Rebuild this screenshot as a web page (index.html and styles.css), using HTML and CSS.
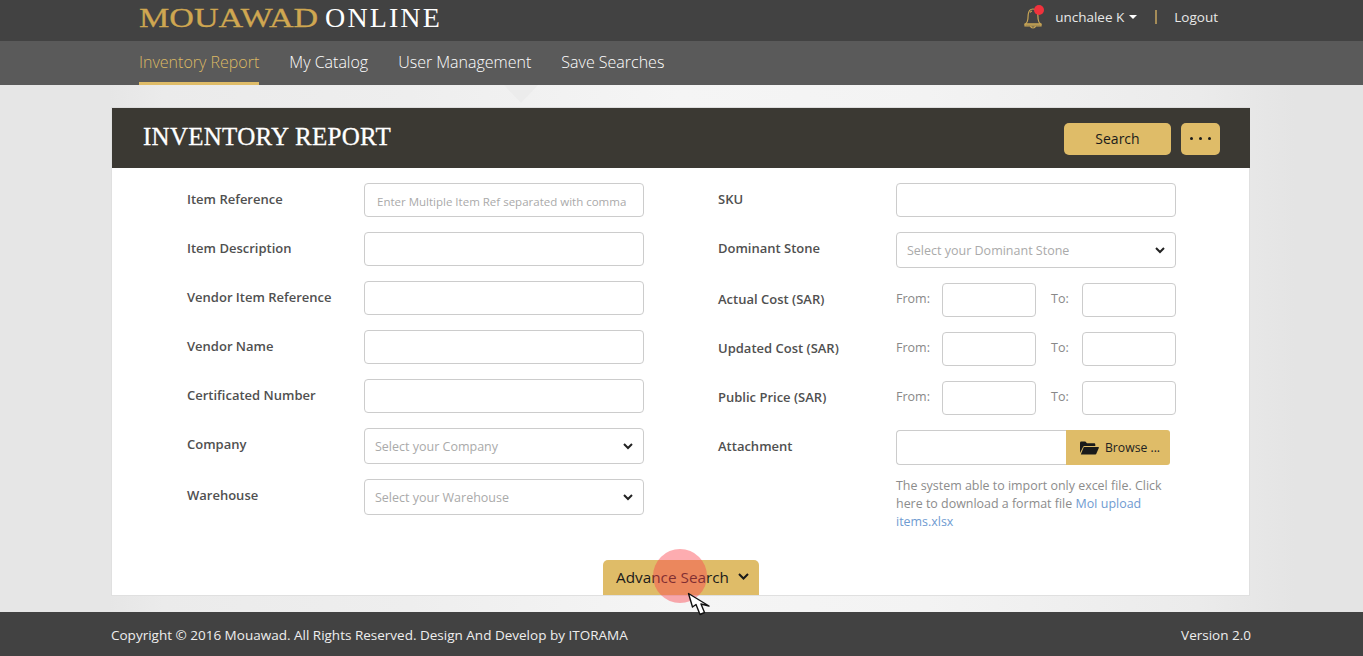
FILE: index.html
```html
<!DOCTYPE HTML>
<html lang="en">
<head>
	<title>Inventory Report - Mouawad Online</title>
	<meta charset="UTF-8">
	<link rel="stylesheet" href="styles.css">
</head>
<body>

<header class="topbar">
	<div class="brand"><span class="brand-gold">MOUAWAD</span><span class="brand-white">ONLINE</span></div>
	<div class="user-area">
		<span class="bell">
			<svg width="21" height="23" viewBox="0 0 21 23" fill="none" stroke="#c9a656" stroke-width="1.2">
				<path d="M1.500 18c1.500-1.300 2.200-2.500 2.400-5l.3-4.500C4.500 5.500 6.300 3 9 3s4.500 2.500 4.800 5.500l.3 4.500c.2 2.500.9 3.700 2.400 5z"/>
				<path d="M1 18.200h16v1.600H1z"/>
				<path d="M6.500 20c.3 1.300 1.300 2 2.500 2s2.200-.7 2.500-2"/>
				<path d="M6 6.500c.5-.8 1.200-1.300 2-1.500"/>
			</svg>
			<span class="bell-dot"></span>
		</span>
		<span class="user-name">unchalee K</span>
		<span class="caret"></span>
		<span class="divider"></span>
		<a class="logout" href="#">Logout</a>
	</div>
</header>

<nav class="navbar">
	<ul>
		<li><a class="active" href="#">Inventory Report</a></li>
		<li><a href="#">My Catalog</a></li>
		<li><a href="#">User Management</a></li>
		<li><a href="#">Save Searches</a></li>
	</ul>
</nav>

<main class="content">
	<section class="card">
		<div class="card-head">
			<h1>INVENTORY REPORT</h1>
			<div class="head-buttons">
				<button class="btn btn-search">Search</button>
				<button class="btn btn-more"><i></i><i></i><i></i></button>
			</div>
		</div>

		<form class="search-form">
			<div class="col col-left">
				<div class="row"><label>Item Reference</label><input class="field" placeholder="Enter Multiple Item Ref separated with comma"></div>
				<div class="row"><label>Item Description</label><input class="field"></div>
				<div class="row"><label>Vendor Item Reference</label><input class="field"></div>
				<div class="row"><label>Vendor Name</label><input class="field"></div>
				<div class="row"><label>Certificated Number</label><input class="field"></div>
				<div class="row row-select">
					<label>Company</label>
					<div class="select">Select your Company
						<svg width="10" height="7" viewBox="0 0 10 7" fill="none" stroke="#222" stroke-width="2"><path d="M1 1l4 4 4-4"/></svg>
					</div>
				</div>
				<div class="row row-select">
					<label>Warehouse</label>
					<div class="select">Select your Warehouse
						<svg width="10" height="7" viewBox="0 0 10 7" fill="none" stroke="#222" stroke-width="2"><path d="M1 1l4 4 4-4"/></svg>
					</div>
				</div>
			</div>

			<div class="col col-right">
				<div class="row"><label>SKU</label><input class="field"></div>
				<div class="row row-select row-tall">
					<label>Dominant Stone</label>
					<div class="select">Select your Dominant Stone
						<svg width="10" height="7" viewBox="0 0 10 7" fill="none" stroke="#222" stroke-width="2"><path d="M1 1l4 4 4-4"/></svg>
					</div>
				</div>
				<div class="row"><label>Actual Cost (SAR)</label><span class="from">From:</span><input class="field small"><span class="to">To:</span><input class="field small"></div>
				<div class="row"><label>Updated Cost (SAR)</label><span class="from">From:</span><input class="field small"><span class="to">To:</span><input class="field small"></div>
				<div class="row"><label>Public Price (SAR)</label><span class="from">From:</span><input class="field small"><span class="to">To:</span><input class="field small"></div>
				<div class="row row-file">
					<label>Attachment</label>
					<div class="file-box"></div>
					<div class="browse">
						<svg width="19" height="14" viewBox="0 0 19 14" fill="#1a1a1a"><path d="M0 12V2c0-.8.500-1.500 1.300-1.500h4L7 2.200h7c.8 0 1.300.5 1.300 1.300V5H4.500C3.800 5 3.300 5.300 3 6z"/><path d="M3.800 6h14.400c.5 0 .8.400.6.900l-2.600 6.100c-.1.300-.5.500-.8.500H.8z"/></svg>
						Browse ...
					</div>
				</div>
				<p class="help">The system able to import only excel file. Click here to download a format file <a href="#">MoI upload items.xlsx</a></p>
			</div>
		</form>

		<div class="advance-wrap">
			<button class="advance">Advance Search
				<svg width="11" height="7" viewBox="0 0 11 7" fill="none" stroke="#1a1a1a" stroke-width="2"><path d="M1 1l4.500 4.500L10 1"/></svg>
			</button>
		</div>
	</section>
</main>

<footer class="footer">
	<span>Copyright &copy; 2016 Mouawad. All Rights Reserved. Design And Develop by ITORAMA</span>
	<span>Version 2.0</span>
</footer>

<!-- screen recorder click marker and mouse pointer -->
<div class="click-mark"></div>
<svg class="pointer" width="24" height="25" viewBox="0 0 24 25">
	<path d="M1.500 1.500L5.500 15 9 12.500l4 10 4.500-2L14 12l8 2z" fill="#fff" stroke="#111" stroke-width="1.400" stroke-linejoin="round"/>
</svg>

</body>
</html>
```

FILE: styles.css
```css
* {
	box-sizing: border-box;
}
html, body {
	height: 100%;
}
body {
	margin: 0;
	position: relative;
	display: flex;
	flex-direction: column;
	height: 656px;
	overflow: hidden;
	font-family: "Open Sans", sans-serif;
	background-color: #e6e6e6;
}

/* top bar */
.topbar {
	height: 41px;
	background-color: #424242;
	display: flex;
	justify-content: space-between;
	padding: 0 145px 0 139px;
	color: white;
}
.brand {
	font-family: "Liberation Serif", serif;
	font-size: 28px;
	line-height: 35px;
	white-space: nowrap;
}
/* the logo face is wider than anything installed */
.brand-gold {
	display: inline-block;
	color: #cfa751;
	-webkit-text-stroke: 0.3px #cfa751;
	transform: scaleX(1.218);
	transform-origin: left center;
	margin-right: 39px;
}
.brand-white {
	color: white;
	letter-spacing: 2.1px;
}
.user-area {
	display: flex;
	align-items: center;
	height: 33px;
	font-size: 13.5px;
	color: #e8e8e8;
}
.bell {
	position: relative;
	width: 21px;
	height: 23px;
	margin-right: 10px;
	margin-top: 2px;
}
.bell svg {
	display: block;
}
.bell-dot {
	position: absolute;
	top: -1px;
	left: 10px;
	width: 10px;
	height: 10px;
	border-radius: 50%;
	background-color: #f0323c;
}
.caret {
	margin-left: 5px;
	border-left: 4px solid transparent;
	border-right: 4px solid transparent;
	border-top: 4px solid white;
}
.divider {
	width: 2px;
	height: 14px;
	margin: 0 17px 0 18px;
	background-color: #a58c58;
}
.logout {
	color: #e8e8e8;
	text-decoration: none;
}

/* nav */
.navbar {
	height: 44px;
	background-color: #5a5a5a;
	padding-left: 139px;
}
.navbar ul {
	list-style-type: none;
	margin: 0;
	padding: 0;
	display: flex;
	gap: 30px;
}
.navbar a {
	display: block;
	height: 44px;
	line-height: 42px;
	font-size: 16px;
	font-weight: 300;
	color: white;
	text-decoration: none;
}
.navbar a.active {
	color: #dcb964;
	border-bottom: 3px solid #dfbc68;
}

/* content */
.content {
	flex: 1;
	padding: 23px 113px 16px 111px;
	background: linear-gradient(90deg, #e6e6e6 0, #e6e6e6 8%, #ebebeb 12%, #eeeeee 30%, #f5f5f5 50%, #f3f3f3 68%, #ebebeb 88%, #e4e4e4 95%);
}
.content::before {
	content: "";
	position: absolute;
	left: 504px;
	top: 85px;
	width: 34px;
	height: 18px;
	background-color: #ececec;
	clip-path: polygon(0 0, 100% 0, 50% 100%);
}
.card {
	position: relative;
	height: 488px;
	background-color: white;
	border: 1px solid #e0e0e0;
	border-top: 0;
	box-shadow: 0 -1px 0 #dddddd;
	display: flex;
	flex-direction: column;
}
.card-head {
	height: 60px;
	margin: 0 -1px 0 0;
	background-color: #3b3933;
	display: flex;
	justify-content: space-between;
	align-items: center;
	padding: 0 30px 0 31px;
}
.card-head h1 {
	margin: -2px 0 0;
	font-family: "Liberation Serif", serif;
	font-size: 25px;
	font-weight: normal;
	color: white;
	-webkit-text-stroke: 0.3px white;
	letter-spacing: 0.27px;
}
.head-buttons {
	display: flex;
	gap: 10px;
	margin-top: 2px;
}
.btn {
	height: 32px;
	border: 0;
	border-radius: 5px;
	background-color: #dfbc68;
	color: #1a1a1a;
	font-family: "Open Sans", sans-serif;
	font-size: 14px;
	padding: 0 0 2px;
}
.btn-search {
	width: 107px;
}
.btn-more {
	width: 39px;
	display: flex;
	justify-content: center;
	align-items: center;
	gap: 6px;
}
.btn-more i {
	width: 3px;
	height: 3px;
	border-radius: 50%;
	background-color: #1a1a1a;
}

/* form */
.search-form {
	display: flex;
	padding: 15px 0 0 75px;
	flex: 1;
}
.col-left {
	width: 531px;
}
.col-right {
	width: 458px;
}
.row {
	display: flex;
	margin-bottom: 15px;
	align-items: flex-start;
}
.row label {
	width: 177px;
	flex: none;
	font-size: 13px;
	font-weight: 600;
	color: #505050;
	line-height: 32px;
}
.col-right .row label {
	width: 178px;
}
.field {
	width: 280px;
	height: 34px;
	border: 1px solid #cccccc;
	border-radius: 4px;
	padding: 2px 12px 0;
	font-family: "Open Sans", sans-serif;
	font-size: 11.5px;
	background-color: white;
}
.field::placeholder {
	color: #aaaaaa;
	opacity: 1;
}
.select {
	width: 280px;
	height: 36px;
	border: 1px solid #cccccc;
	border-radius: 4px;
	padding: 1px 10px 0;
	font-size: 12.5px;
	color: #aaaaaa;
	display: flex;
	justify-content: space-between;
	align-items: center;
}
.from, .to {
	font-size: 12.5px;
	color: #888888;
	line-height: 32px;
}
.from {
	width: 46px;
}
.to {
	width: 31px;
	margin-left: 15px;
}
.field.small {
	width: 94px;
}
.row-file {
	margin-bottom: 12px;
}
.file-box {
	width: 170px;
	height: 35px;
	border: 1px solid #cccccc;
	border-right: 0;
	border-radius: 4px 0 0 4px;
}
.browse {
	width: 104px;
	height: 35px;
	background-color: #dfbc68;
	border-radius: 0 3px 3px 0;
	color: #222222;
	font-size: 12.2px;
	display: flex;
	align-items: center;
	gap: 6px;
	padding-left: 14px;
}
.help {
	margin: 0 0 0 178px;
	width: 280px;
	font-size: 12.45px;
	line-height: 18px;
	color: #8c8c8c;
}
.help a {
	color: #6f9bd1;
	text-decoration: none;
}

/* advance search */
.advance-wrap {
	display: flex;
	justify-content: center;
}
.advance {
	width: 156px;
	height: 35px;
	border: 0;
	border-radius: 5px 5px 0 0;
	background-color: #dfbc68;
	color: #1a1a1a;
	font-family: "Open Sans", sans-serif;
	font-size: 15.3px;
	padding: 0 0 2px 4px;
	display: flex;
	justify-content: center;
	align-items: center;
	gap: 9px;
}

/* footer */
.footer {
	height: 44px;
	background-color: #424242;
	color: #eeeeee;
	font-size: 13.5px;
	display: flex;
	justify-content: space-between;
	align-items: center;
	padding: 1px 112px 0 111px;
}

/* overlay of the screen recording */
.click-mark {
	position: absolute;
	left: 653px;
	top: 549px;
	width: 54px;
	height: 54px;
	border-radius: 50%;
	background-color: rgba(250, 70, 80, 0.45);
}
.pointer {
	position: absolute;
	left: 687px;
	top: 592px;
}
```
